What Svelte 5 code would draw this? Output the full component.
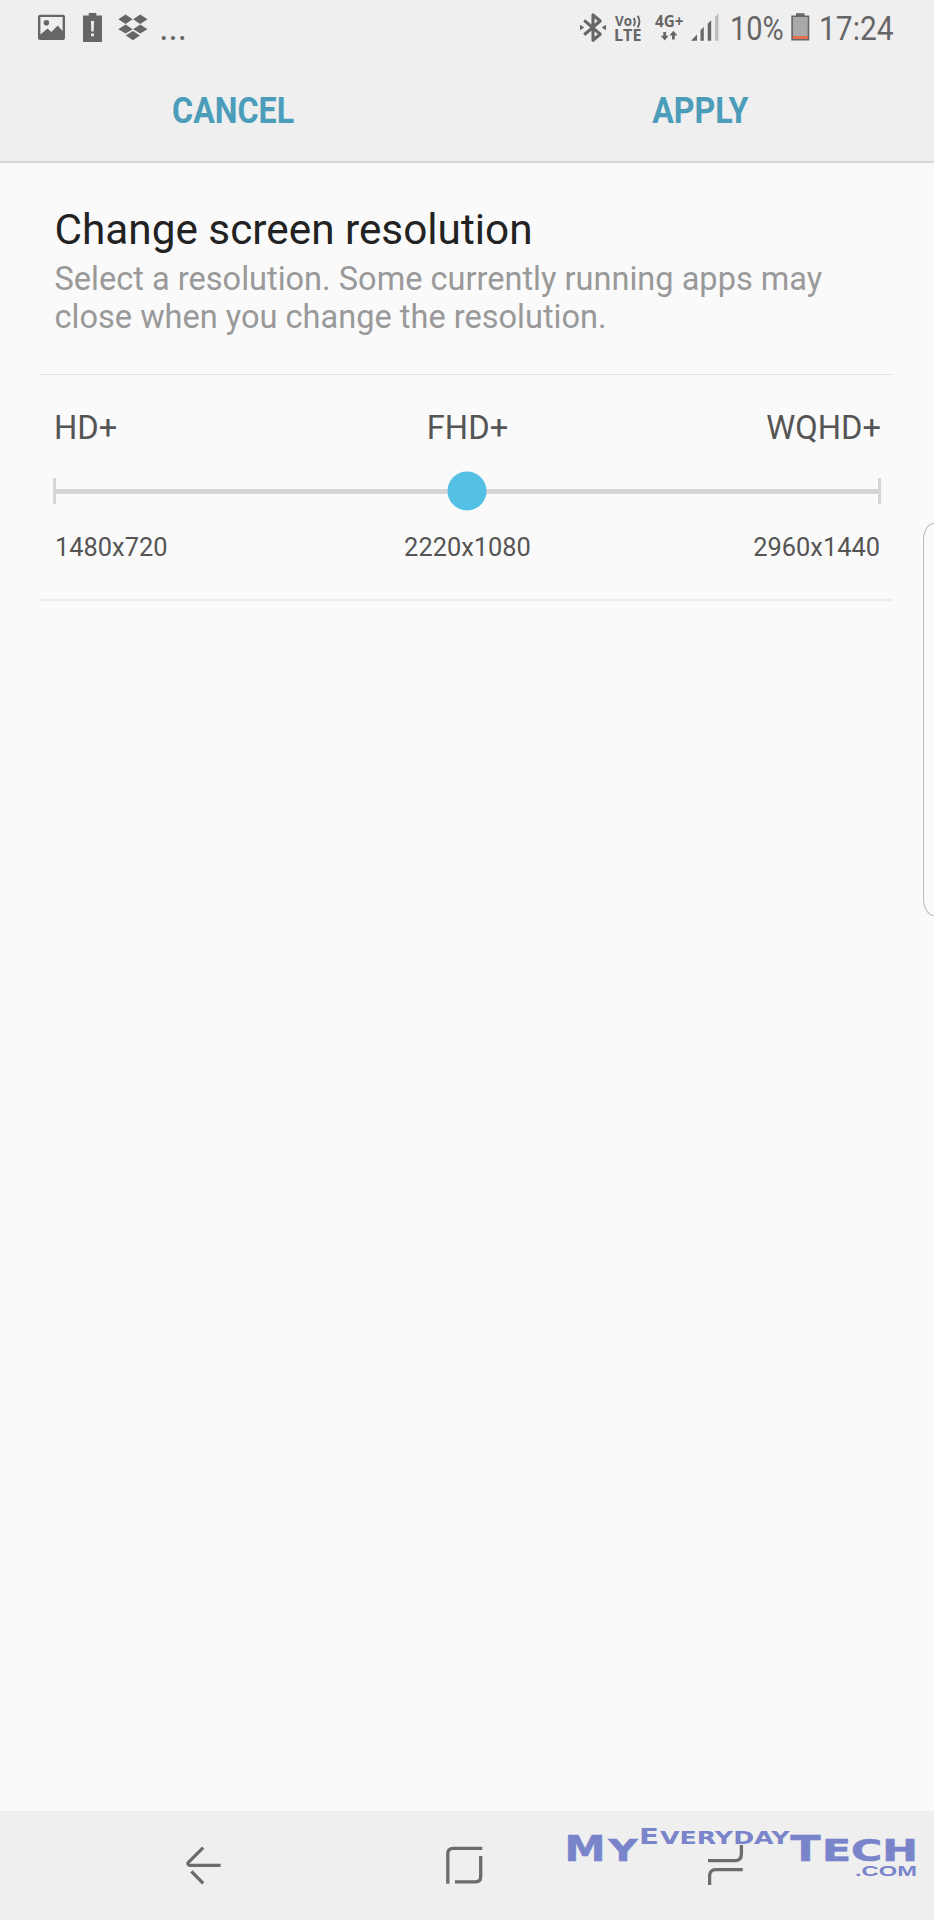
<script>
  const options = [
    { name: 'HD+', size: '1480x720' },
    { name: 'FHD+', size: '2220x1080' },
    { name: 'WQHD+', size: '2960x1440' }
  ];

  let selected = 1;

  $: thumbLeft = (selected / (options.length - 1)) * 100;
</script>

<div class="screen">
  <header class="top">
    <div class="status-bar">
      <div class="status-left">
        <!-- picture -->
        <svg width="27" height="56" viewBox="0 0 27 56">
          <path fill-rule="evenodd" d="M2 14.7H25Q27 14.7 27 16.7V38Q27 40 25 40H2Q0 40 0 38V16.7Q0 14.7 2 14.7ZM2.4 17V34.5L9.5 28.5L13.3 32L19.7 25.5L24.6 31V17Z" />
          <circle cx="8.4" cy="22.8" r="2.8" />
        </svg>
        <!-- battery warning -->
        <svg class="alert" width="19" height="56" viewBox="0 0 19 56">
          <path d="M0 15.5H5.7V13H13.3V15.5H19V42H0Z" />
          <path class="cut" d="M8 21H11L10.7 31.5H8.3ZM8.1 33.5H10.9V36.2H8.1Z" />
        </svg>
        <!-- dropbox -->
        <svg class="dropbox" width="30" height="56" viewBox="0 0 30 56">
          <path d="M7.6 14.5L14.7 19.2L7.6 23.9L0.3 19.2ZM22.2 14.5L29.5 19.2L22.2 23.9L15.1 19.2ZM7.6 24.6L14.7 29.3L7.6 33.6L0.3 29.3ZM22.2 24.6L29.5 29.3L22.2 33.6L15.1 29.3ZM14.9 31L22 35.6L14.9 40.3L7.8 35.6Z" />
        </svg>
        <span class="more">...</span>
      </div>

      <div class="status-right">
        <!-- bluetooth connected -->
        <svg width="26" height="56" viewBox="0 0 26 56">
          <path class="line" d="M4.2 20.3L20.2 34.2L13 40.3V14.9L20.2 21L4.2 34.7" />
          <path d="M0 24.7L4.3 27.5L0 30.3ZM26 24.7L21.7 27.5L26 30.3Z" />
        </svg>
        <svg class="volte" width="27" height="56" viewBox="0 0 27 56">
          <text x="0" y="25.8" font-size="13.3" textLength="17" lengthAdjust="spacingAndGlyphs">Vo</text>
          <path class="wave" d="M18.7 18Q21 21.8 18.7 26M22.6 15.8Q26.3 21.5 22.6 27.4" />
          <text x="-1" y="41" font-size="15.4" textLength="27.5" lengthAdjust="spacingAndGlyphs">LTE</text>
        </svg>
        <svg class="network" width="29" height="56" viewBox="0 0 29 56">
          <text x="0" y="26.5" font-size="15.2" textLength="28.5" lengthAdjust="spacingAndGlyphs">4G+</text>
          <path d="M8.3 32H11.1V35.8H13.6L9.7 40.5L5.8 35.8H8.3ZM17 39.5V35.4H14.4L18.4 30.8L22.4 35.4H19.8V39.5Z" />
        </svg>
        <svg class="signal" width="28" height="56" viewBox="0 0 28 56">
          <path d="M0 40.7L6 34.6V40.7ZM9.5 40.7V30.3L12.8 27V40.7ZM16.7 40.7V23.7L20.2 20.2V40.7Z" />
          <path class="empty" d="M24 40.7V17L27.5 13.5V40.7Z" />
        </svg>
        <span class="percent">10%</span>
        <svg class="battery" width="19" height="56" viewBox="0 0 19 56">
          <path d="M0.3 15.4H5V13.2H13.6V15.4H18.3V40.5H0.3Z" />
          <rect class="cell" x="1.9" y="17" width="14.8" height="19.3" />
          <rect class="low" x="1.9" y="36" width="14.8" height="3" />
        </svg>
        <span class="clock">17:24</span>
      </div>
    </div>

    <div class="actions">
      <button><span>CANCEL</span></button>
      <button><span>APPLY</span></button>
    </div>
  </header>

  <main>
    <section class="intro">
      <h1>Change screen resolution</h1>
      <p>Select a resolution. Some currently running apps may<br />close when you change the resolution.</p>
    </section>

    <section class="resolution">
      <div class="row names">
        {#each options as option, i}
          <span on:click={() => (selected = i)} role="presentation">{option.name}</span>
        {/each}
      </div>
      <div class="slider">
        <div class="track"></div>
        <div class="thumb" style="left: {thumbLeft}%"></div>
      </div>
      <div class="row sizes">
        {#each options as option}
          <span>{option.size}</span>
        {/each}
      </div>
    </section>
  </main>

  <div class="edge-handle"></div>

  <nav>
    <svg class="back" width="36" height="42" viewBox="0 0 36 42">
      <path d="M17.2 2.6L2.4 17.4Q1 19.4 3.6 20.3H34.7M5.4 26.4L17.2 38.4" />
    </svg>
    <svg class="home" width="38" height="42" viewBox="0 0 38 42">
      <path d="M36.3 3.3H7Q1.8 3.3 1.8 8.5V38.7M34.7 11V31.5Q34.7 36.9 29.3 36.9H9" />
    </svg>
    <svg class="recents" width="36" height="42" viewBox="0 0 36 42">
      <path d="M33.4 0V9Q33.4 15.6 27 15.6H0M34.7 24.7H7.6Q1.6 24.7 1.6 31V40" />
    </svg>
  </nav>

  <svg class="watermark" width="354" height="56" viewBox="0 0 354 56">
    <g class="heavy">
      <text x="-1.5" y="36.7" font-size="35.3" textLength="41" lengthAdjust="spacingAndGlyphs">M</text>
      <text x="42.5" y="36.7" font-size="29.5" textLength="29" lengthAdjust="spacingAndGlyphs">Y</text>
      <text x="224.5" y="36.7" font-size="35.3" textLength="30" lengthAdjust="spacingAndGlyphs">T</text>
      <text x="256" y="36.7" font-size="29.5" textLength="96" lengthAdjust="spacingAndGlyphs">ECH</text>
    </g>
    <g class="light">
      <text x="73" y="20.3" font-size="21" textLength="20" lengthAdjust="spacingAndGlyphs">E</text>
      <text x="94" y="20.3" font-size="16.8" textLength="129.5" lengthAdjust="spacingAndGlyphs">VERYDAY</text>
      <text class="domain" x="289" y="52" font-size="15" textLength="62" lengthAdjust="spacingAndGlyphs">.COM</text>
    </g>
  </svg>
</div>

<style>
  :global(body) {
    margin: 0;
  }

  .screen {
    position: relative;
    width: 934px;
    height: 1920px;
    display: flex;
    flex-direction: column;
    overflow: hidden;
    background: #fafafa;
    font-family: Roboto, 'Liberation Sans', sans-serif;
  }

  .top {
    box-sizing: border-box;
    height: 163px;
    background: #efefef;
    border-bottom: 2px solid #d5d5d5;
  }

  .status-bar {
    display: flex;
    justify-content: space-between;
    height: 56px;
    padding: 0 40px 0 38px;
    color: #666;
    fill: #666;
  }

  .status-left,
  .status-right {
    display: flex;
  }

  .alert {
    margin-left: 18px;
  }

  .cut {
    fill: #efefef;
  }

  .dropbox {
    margin-left: 16px;
  }

  .more {
    margin-left: 12px;
    font-family: 'Open Sans', sans-serif;
    font-size: 27px;
    font-weight: 600;
    line-height: 60px;
    letter-spacing: 1.8px;
  }

  .line {
    fill: none;
    stroke: #666;
    stroke-width: 3.1;
    stroke-linejoin: round;
  }

  .volte,
  .network {
    font-family: 'Open Sans', sans-serif;
    font-weight: 700;
  }

  .volte {
    margin-left: 9px;
  }

  .wave {
    fill: none;
    stroke: #666;
    stroke-width: 1.9;
  }

  .network {
    margin-left: 13px;
  }

  .signal {
    margin-left: 7px;
  }

  .empty {
    fill: #bdbdbd;
  }

  .percent,
  .clock {
    font-size: 34px;
    line-height: 56px;
    transform-origin: left;
    white-space: nowrap;
  }

  .percent {
    width: 54px;
    margin-left: 11px;
    transform: scaleX(0.85);
  }

  .battery {
    margin-left: 7px;
  }

  .cell {
    fill: #a9a9a9;
  }

  .low {
    fill: #e4714d;
  }

  .clock {
    width: 75px;
    margin-left: 9px;
    transform: scaleX(0.88);
  }

  .actions {
    display: flex;
    height: 105px;
  }

  button {
    flex: 1;
    padding: 4px 0 0;
    border: none;
    background: none;
    color: #4b9dba;
    font-family: inherit;
    font-size: 37px;
    font-weight: 700;
    line-height: 44px;
  }

  button span {
    display: inline-block;
    transform: scaleX(0.87);
  }

  main {
    flex: 1;
    padding: 0 41px;
  }

  .intro {
    height: 212px;
    padding: 42px 0 0 13.5px;
    box-sizing: border-box;
    border-bottom: 1px solid #e2e2e2;
  }

  h1 {
    margin: 0;
    color: #222;
    font-size: 42.3px;
    font-weight: 400;
    line-height: 50px;
  }

  p {
    margin: 6px 0 0;
    color: #999;
    font-size: 32.55px;
    line-height: 37.5px;
    white-space: nowrap;
  }

  .resolution {
    box-sizing: border-box;
    height: 226px;
    padding: 33px 12px 0;
    border-bottom: 2px solid #ebebeb;
    color: #555;
  }

  .row {
    display: grid;
    grid-template-columns: 1fr 1fr 1fr;
    text-align: center;
  }

  .row span:first-child {
    text-align: left;
  }

  .row span:last-child {
    text-align: right;
  }

  .names {
    padding: 0 0 0 1px;
    font-size: 32.7px;
    line-height: 40px;
  }

  .slider {
    position: relative;
    display: flex;
    align-items: center;
    height: 26px;
    margin-top: 30px;
  }

  .track {
    flex: 1;
    height: 5px;
    background: #d6d6d6;
  }

  .slider::before,
  .slider::after {
    content: '';
    width: 3px;
    height: 26px;
    background: #d6d6d6;
  }

  .thumb {
    position: absolute;
    top: 50%;
    width: 39px;
    height: 39px;
    border-radius: 50%;
    background: #55c0e5;
    transform: translate(-50%, -50%);
  }

  .sizes {
    margin-top: 27px;
    padding: 0 1px 0 2px;
    font-size: 25.4px;
    line-height: 32px;
  }

  /* edge panel handle, runs off the right side */
  .edge-handle {
    position: absolute;
    top: 523px;
    right: -11px;
    width: 20px;
    height: 391px;
    border: 1.5px solid #bbb;
    border-radius: 11px / 17px;
  }

  nav {
    display: flex;
    align-items: center;
    height: 109px;
    padding-left: 186px;
    background: #efefef;
    fill: none;
    stroke: #6c6c6c;
    stroke-width: 3.3;
  }

  .home {
    margin-left: 224px;
  }

  .recents {
    margin-left: 224px;
  }

  .watermark {
    position: absolute;
    left: 566px;
    top: 1824px;
    fill: #7984cb;
    font-family: 'DejaVu Sans', sans-serif;
    font-weight: 700;
  }

  .heavy {
    stroke: #7984cb;
    stroke-width: 0.6;
  }

  .domain {
    font-family: 'Liberation Sans', sans-serif;
  }
</style>
